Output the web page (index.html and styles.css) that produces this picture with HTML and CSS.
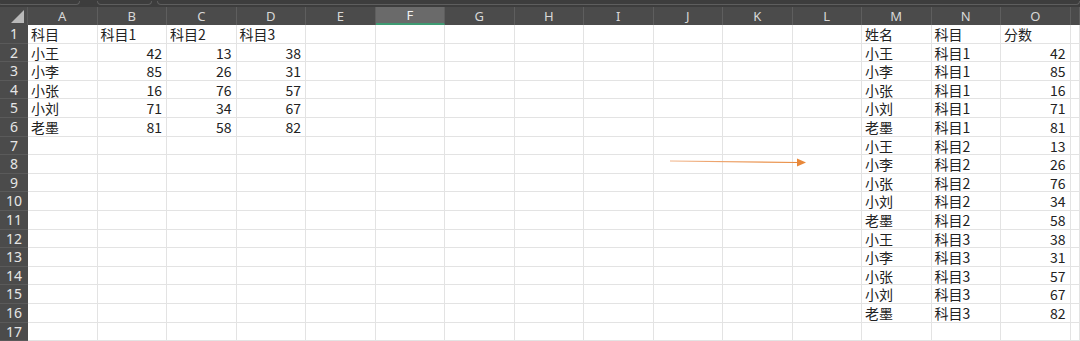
FILE: index.html
```html
<!DOCTYPE html>
<html>
<head>
<meta charset="utf-8">
<link rel="stylesheet" href="styles.css">
</head>
<body>
<div class="top">
  <div class="tab t1"></div>
  <div class="tab t2"></div>
  <div class="tab t3"></div>
</div>
<div class="sheet">
  <div class="corner"></div><div class="ch">A</div><div class="ch">B</div><div class="ch">C</div><div class="ch">D</div><div class="ch">E</div><div class="ch sel">F</div><div class="ch">G</div><div class="ch">H</div><div class="ch">I</div><div class="ch">J</div><div class="ch">K</div><div class="ch">L</div><div class="ch">M</div><div class="ch">N</div><div class="ch">O</div><div class="ch"></div>

  <div class="rh">1</div><div class="c">科目</div><div class="c">科目1</div><div class="c">科目2</div><div class="c">科目3</div><div class="c"></div><div class="c"></div><div class="c"></div><div class="c"></div><div class="c"></div><div class="c"></div><div class="c"></div><div class="c"></div><div class="c">姓名</div><div class="c">科目</div><div class="c">分数</div><div class="c"></div>

  <div class="rh">2</div><div class="c">小王</div><div class="c n">42</div><div class="c n">13</div><div class="c n">38</div><div class="c"></div><div class="c"></div><div class="c"></div><div class="c"></div><div class="c"></div><div class="c"></div><div class="c"></div><div class="c"></div><div class="c">小王</div><div class="c">科目1</div><div class="c n">42</div><div class="c"></div>

  <div class="rh">3</div><div class="c">小李</div><div class="c n">85</div><div class="c n">26</div><div class="c n">31</div><div class="c"></div><div class="c"></div><div class="c"></div><div class="c"></div><div class="c"></div><div class="c"></div><div class="c"></div><div class="c"></div><div class="c">小李</div><div class="c">科目1</div><div class="c n">85</div><div class="c"></div>

  <div class="rh">4</div><div class="c">小张</div><div class="c n">16</div><div class="c n">76</div><div class="c n">57</div><div class="c"></div><div class="c"></div><div class="c"></div><div class="c"></div><div class="c"></div><div class="c"></div><div class="c"></div><div class="c"></div><div class="c">小张</div><div class="c">科目1</div><div class="c n">16</div><div class="c"></div>

  <div class="rh">5</div><div class="c">小刘</div><div class="c n">71</div><div class="c n">34</div><div class="c n">67</div><div class="c"></div><div class="c"></div><div class="c"></div><div class="c"></div><div class="c"></div><div class="c"></div><div class="c"></div><div class="c"></div><div class="c">小刘</div><div class="c">科目1</div><div class="c n">71</div><div class="c"></div>

  <div class="rh">6</div><div class="c">老墨</div><div class="c n">81</div><div class="c n">58</div><div class="c n">82</div><div class="c"></div><div class="c"></div><div class="c"></div><div class="c"></div><div class="c"></div><div class="c"></div><div class="c"></div><div class="c"></div><div class="c">老墨</div><div class="c">科目1</div><div class="c n">81</div><div class="c"></div>

  <div class="rh">7</div><div class="c"></div><div class="c"></div><div class="c"></div><div class="c"></div><div class="c"></div><div class="c"></div><div class="c"></div><div class="c"></div><div class="c"></div><div class="c"></div><div class="c"></div><div class="c"></div><div class="c">小王</div><div class="c">科目2</div><div class="c n">13</div><div class="c"></div>

  <div class="rh">8</div><div class="c"></div><div class="c"></div><div class="c"></div><div class="c"></div><div class="c"></div><div class="c"></div><div class="c"></div><div class="c"></div><div class="c"></div><div class="c"></div><div class="c"></div><div class="c"></div><div class="c">小李</div><div class="c">科目2</div><div class="c n">26</div><div class="c"></div>

  <div class="rh">9</div><div class="c"></div><div class="c"></div><div class="c"></div><div class="c"></div><div class="c"></div><div class="c"></div><div class="c"></div><div class="c"></div><div class="c"></div><div class="c"></div><div class="c"></div><div class="c"></div><div class="c">小张</div><div class="c">科目2</div><div class="c n">76</div><div class="c"></div>

  <div class="rh">10</div><div class="c"></div><div class="c"></div><div class="c"></div><div class="c"></div><div class="c"></div><div class="c"></div><div class="c"></div><div class="c"></div><div class="c"></div><div class="c"></div><div class="c"></div><div class="c"></div><div class="c">小刘</div><div class="c">科目2</div><div class="c n">34</div><div class="c"></div>

  <div class="rh">11</div><div class="c"></div><div class="c"></div><div class="c"></div><div class="c"></div><div class="c"></div><div class="c"></div><div class="c"></div><div class="c"></div><div class="c"></div><div class="c"></div><div class="c"></div><div class="c"></div><div class="c">老墨</div><div class="c">科目2</div><div class="c n">58</div><div class="c"></div>

  <div class="rh">12</div><div class="c"></div><div class="c"></div><div class="c"></div><div class="c"></div><div class="c"></div><div class="c"></div><div class="c"></div><div class="c"></div><div class="c"></div><div class="c"></div><div class="c"></div><div class="c"></div><div class="c">小王</div><div class="c">科目3</div><div class="c n">38</div><div class="c"></div>

  <div class="rh">13</div><div class="c"></div><div class="c"></div><div class="c"></div><div class="c"></div><div class="c"></div><div class="c"></div><div class="c"></div><div class="c"></div><div class="c"></div><div class="c"></div><div class="c"></div><div class="c"></div><div class="c">小李</div><div class="c">科目3</div><div class="c n">31</div><div class="c"></div>

  <div class="rh">14</div><div class="c"></div><div class="c"></div><div class="c"></div><div class="c"></div><div class="c"></div><div class="c"></div><div class="c"></div><div class="c"></div><div class="c"></div><div class="c"></div><div class="c"></div><div class="c"></div><div class="c">小张</div><div class="c">科目3</div><div class="c n">57</div><div class="c"></div>

  <div class="rh">15</div><div class="c"></div><div class="c"></div><div class="c"></div><div class="c"></div><div class="c"></div><div class="c"></div><div class="c"></div><div class="c"></div><div class="c"></div><div class="c"></div><div class="c"></div><div class="c"></div><div class="c">小刘</div><div class="c">科目3</div><div class="c n">67</div><div class="c"></div>

  <div class="rh">16</div><div class="c"></div><div class="c"></div><div class="c"></div><div class="c"></div><div class="c"></div><div class="c"></div><div class="c"></div><div class="c"></div><div class="c"></div><div class="c"></div><div class="c"></div><div class="c"></div><div class="c">老墨</div><div class="c">科目3</div><div class="c n">82</div><div class="c"></div>

  <div class="rh">17</div><div class="c"></div><div class="c"></div><div class="c"></div><div class="c"></div><div class="c"></div><div class="c"></div><div class="c"></div><div class="c"></div><div class="c"></div><div class="c"></div><div class="c"></div><div class="c"></div><div class="c"></div><div class="c"></div><div class="c"></div><div class="c"></div>

  <svg class="arrow" width="140" height="12" viewBox="0 0 140 12">
    <defs>
      <linearGradient id="g" x1="0" x2="1" y1="0" y2="0">
        <stop offset="0" stop-color="#f0b48a"/>
        <stop offset="1" stop-color="#e8883a"/>
      </linearGradient>
    </defs>
    <line x1="0" y1="5" x2="128" y2="6.5" stroke="url(#g)" stroke-width="1.2"/>
    <polygon points="127,2.5 136,6.5 127,10.5" fill="#e8883a"/>
  </svg>
</div>
</body>
</html>
```

FILE: styles.css
```css
html, body {
  margin: 0;
  padding: 0;
  background: #ffffff;
  width: 1080px;
  height: 341px;
  overflow: hidden;
}

.top {
  height: 7px;
  background: #3d3d3d;
  display: flex;
  gap: 0;
  position: relative;
  overflow: hidden;
}

.tab {
  height: 4px;
  border: 1px solid #5e5e5e;
  border-top: none;
  border-radius: 0 0 6px 6px;
  box-sizing: border-box;
  margin-top: 1px;
}

.t1 { width: 84px; margin-left: -2px; }
.t2 { width: 56px; margin-left: 17px; }
.t3 { width: 940px; margin-left: 5px; }

.sheet {
  position: relative;
  display: grid;
  grid-template-columns: 28px repeat(15, 69.5px) 1fr;
  grid-template-rows: 18px repeat(17, 18.6px);
  font-family: "Noto Sans CJK SC", "Microsoft YaHei", sans-serif;
  font-size: 14px;
  color: #222;
}

.corner {
  background: #4b4b4b;
  position: relative;
  border-right: 1px solid #5a5a5a;
}

.corner::after {
  content: "";
  position: absolute;
  right: 3px;
  bottom: 2px;
  width: 0;
  height: 0;
  border-left: 13px solid transparent;
  border-bottom: 13px solid #b9b9b9;
}

.ch {
  background: #4b4b4b;
  color: #d8d8d8;
  font-family: "Noto Sans", "Liberation Sans", sans-serif;
  font-size: 13px;
  line-height: 18px;
  text-align: center;
  border-right: 1px solid #5e5e5e;
  box-sizing: border-box;
}

.ch.sel {
  background: #6a6a6a;
  color: #f2f2f2;
  border-bottom: 2px solid #3e9a72;
  line-height: 17px;
}

.rh {
  background: #4b4b4b;
  color: #e6e6e6;
  font-family: "Noto Sans", "Liberation Sans", sans-serif;
  font-size: 14px;
  line-height: 18px;
  text-align: center;
  border-bottom: 1px solid #5a5a5a;
  box-sizing: border-box;
}

.c {
  border-right: 1px solid #e3e3e3;
  border-bottom: 1px solid #e3e3e3;
  box-sizing: border-box;
  line-height: 18px;
  padding: 0 3px;
  white-space: nowrap;
  overflow: hidden;
}

.n {
  text-align: right;
  padding-right: 4px;
}

.arrow {
  position: absolute;
  left: 670px;
  top: 149px;
}
```
